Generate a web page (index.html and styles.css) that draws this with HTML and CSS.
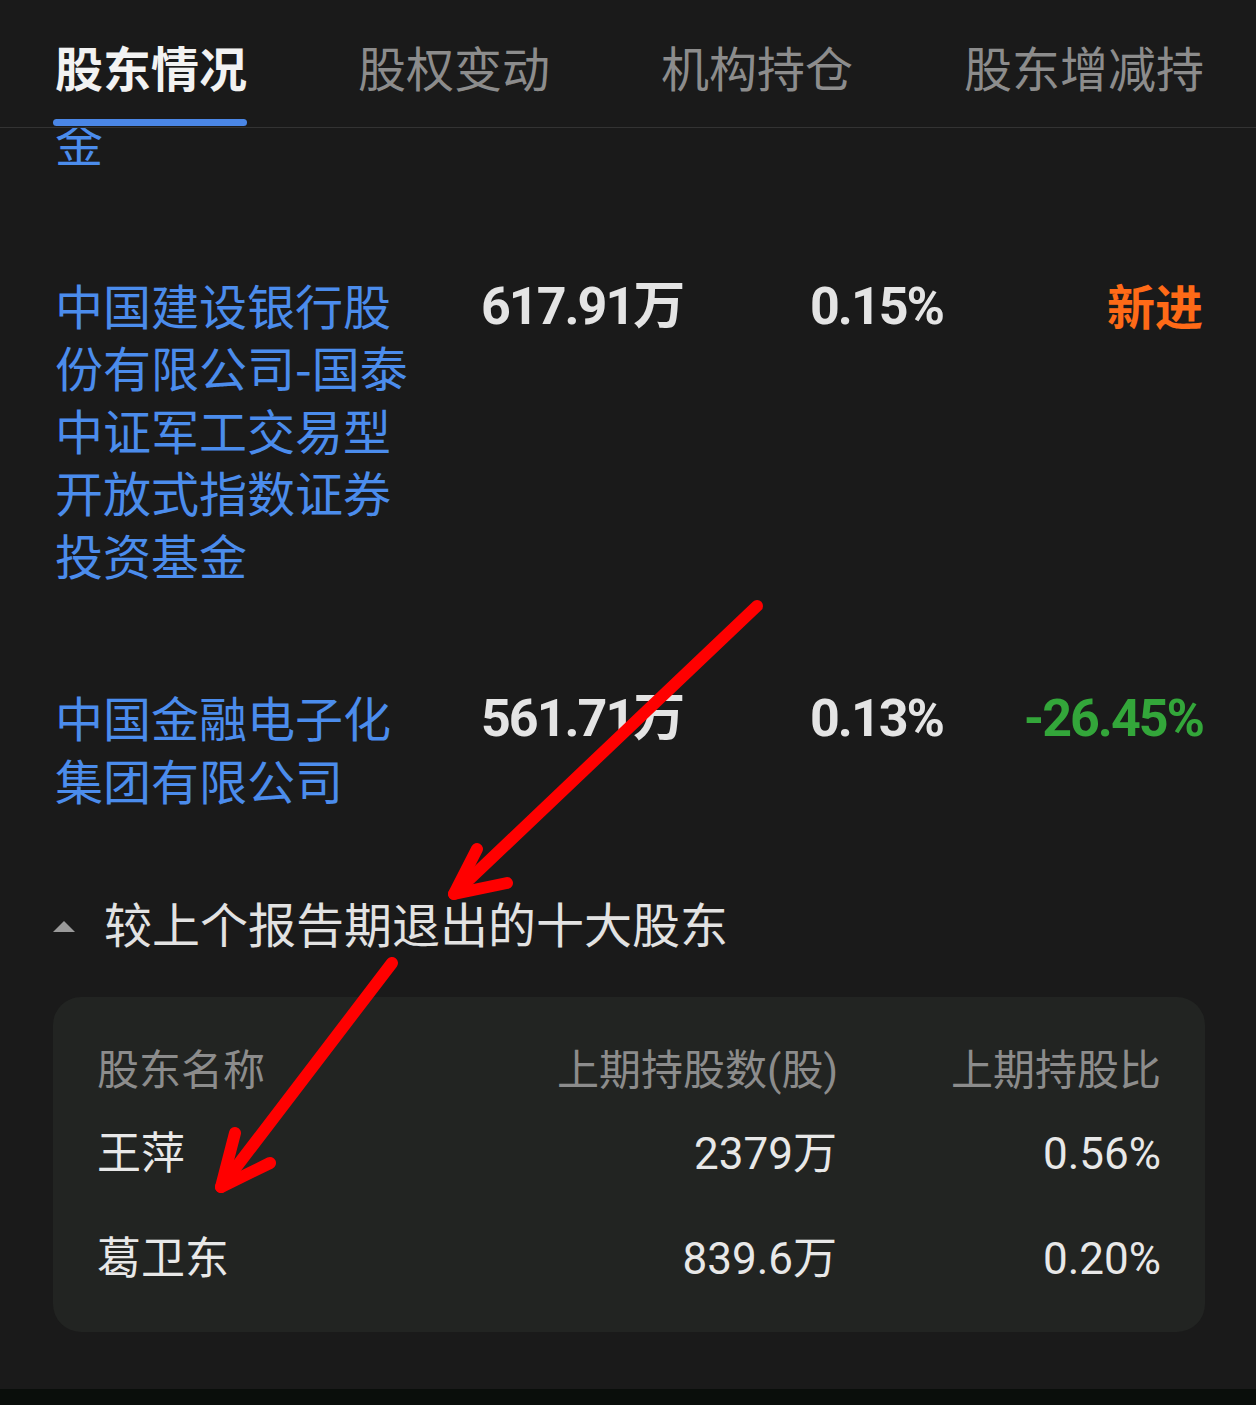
FILE: index.html
```html
<!DOCTYPE html>
<html lang="zh-CN">
<head>
    <meta charset="utf-8">
    <title>股东情况</title>
    <link rel="stylesheet" href="styles.css">
</head>
<body>
    <div class="page">
        <div class="tabs">
            <div class="tab active">
                <span>股东情况</span>
                <i class="tab-line"></i>
            </div>
            <div class="tab"><span>股权变动</span></div>
            <div class="tab"><span>机构持仓</span></div>
            <div class="tab"><span>股东增减持</span></div>
        </div>

        <div class="content">
            <!-- previous row, scrolled mostly out of view -->
            <div class="holder cut">
                <div class="name">金</div>
            </div>

            <div class="holder">
                <div class="name">中国建设银行股份有限公司-国泰中证军工交易型开放式指数证券投资基金</div>
                <div class="amount">617.91万</div>
                <div class="ratio">0.15%</div>
                <div class="change new">新进</div>
            </div>

            <div class="holder">
                <div class="name">中国金融电子化集团有限公司</div>
                <div class="amount">561.71万</div>
                <div class="ratio">0.13%</div>
                <div class="change down">-26.45%</div>
            </div>

            <div class="section-title">
                <span class="caret"></span>
                <span>较上个报告期退出的十大股东</span>
            </div>

            <div class="card">
                <div class="card-row head">
                    <div>股东名称</div>
                    <div class="num">上期持股数(股)</div>
                    <div class="num">上期持股比</div>
                </div>
                <div class="card-row">
                    <div>王萍</div>
                    <div class="num">2379万</div>
                    <div class="num">0.56%</div>
                </div>
                <div class="card-row">
                    <div>葛卫东</div>
                    <div class="num">839.6万</div>
                    <div class="num">0.20%</div>
                </div>
            </div>
        </div>

        <div class="nav-strip"></div>

        <!-- red hand-drawn annotation arrows on top of the screenshot -->
        <svg class="marks" width="1256" height="1405" viewBox="0 0 1256 1405">
            <g fill="none" stroke="#ff0000" stroke-width="12" stroke-linecap="round" stroke-linejoin="round">
                <path d="M757 606 L454 894"/>
                <path d="M477 849 L454 894 L507 883"/>
                <path d="M392 963 L221 1187"/>
                <path d="M235 1133 L221 1187 L270 1163"/>
            </g>
        </svg>
    </div>
</body>
</html>
```

FILE: styles.css
```css
* {
    margin: 0;
    padding: 0;
    box-sizing: border-box;
}

body {
    background: #1a1a1a;
    font-family: 'Noto Sans CJK SC', 'Noto Sans', sans-serif;
    color: #e6e6e6;
}

.page {
    position: relative;
    width: 1256px;
    height: 1405px;
    display: flex;
    flex-direction: column;
    overflow: hidden;
}

/* tabs */
.tabs {
    display: flex;
    gap: 111px;
    padding-left: 55px;
    border-bottom: 1px solid #333333;
    flex-shrink: 0;
}

.tab {
    display: flex;
    flex-direction: column;
    height: 127px;
    padding-top: 35px;
    font-size: 48px;
    line-height: 62px;
    color: #8c8c8c;
}

.tab.active {
    color: #f2f2f2;
    font-weight: 700;
}

.tab-line {
    display: block;
    height: 7px;
    margin: 22px 0 0 -2px;
    border-radius: 4px;
    background: #4a86e6;
}

/* list */
.content {
    flex: 1;
    overflow: hidden;
    padding: 0 53px 0 55px;
}

.holder {
    display: grid;
    grid-template-columns: 426px 329px 1fr auto;
    align-items: start;
    padding: 50px 0;
}

.holder.cut {
    margin-top: -18px;
    padding-top: 0;
}

.name {
    padding-right: 66px;
    font-size: 48px;
    line-height: 62.5px;
    color: #4b8cec;
}

.amount,
.ratio,
.change {
    padding-top: 3px;
    font-family: 'Roboto', 'Noto Sans CJK SC', sans-serif;
    font-weight: 700;
    font-size: 52px;
    line-height: 62.5px;
    letter-spacing: -2px;
    color: #e4e4e4;
}

.change {
    text-align: right;
}

.change.new {
    padding-top: 0;
    font-family: 'Noto Sans CJK SC', sans-serif;
    font-size: 48px;
    letter-spacing: 0;
    color: #ff6a17;
}

.change.down {
    color: #33a63a;
}

.section-title {
    display: flex;
    align-items: center;
    padding: 31px 0 44px;
    font-size: 48px;
    line-height: 62px;
    color: #e2e2e2;
}

.caret {
    width: 0;
    height: 0;
    margin: 9px 29px 0 -2px;
    border-left: 11px solid transparent;
    border-right: 11px solid transparent;
    border-bottom: 11px solid #9a9a9a;
}

/* exited holders card */
.card {
    margin: 0 -2px;
    padding: 44px 44px 21px;
    border-radius: 28px;
    background: #222422;
    font-family: 'Roboto', 'Noto Sans CJK SC', sans-serif;
}

.card-row {
    display: grid;
    grid-template-columns: 1fr 280px 324px;
    padding: 23px 0 22px;
    font-size: 44px;
    line-height: 60px;
    white-space: nowrap;
    color: #e8e8e8;
}

.card-row.head {
    padding: 0;
    font-size: 42px;
    color: #8c8c8c;
}

.num {
    text-align: right;
}

.nav-strip {
    height: 16px;
    flex-shrink: 0;
    background: #0a0e0b;
}

.marks {
    position: absolute;
    left: 0;
    top: 0;
    pointer-events: none;
}
```
